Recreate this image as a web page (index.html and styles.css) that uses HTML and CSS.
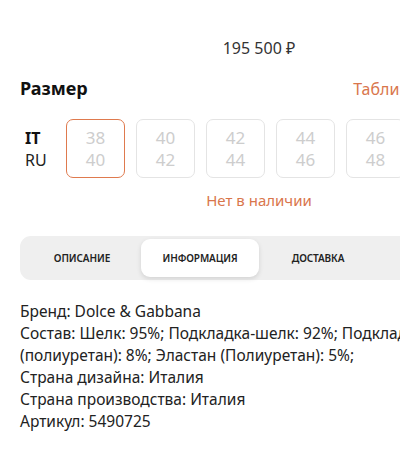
FILE: index.html
```html
<!DOCTYPE html>
<html lang="ru">
<head>
    <meta charset="UTF-8">
    <meta name="viewport" content="width=device-width, initial-scale=1.0">
    <title>Товар</title>
    <link rel="stylesheet" href="styles.css">
</head>
<body>
    <div class="page">
        <div class="price">195 500 ₽</div>

        <div class="size-head">
            <h2 class="size-title">Размер</h2>
            <a class="size-table" href="javascript:;">Таблица размеров</a>
        </div>

        <div class="size-row">
            <div class="size-labels">
                <span class="lbl-it">IT</span>
                <span class="lbl-ru">RU</span>
            </div>
            <div class="size-list">
                <div class="size-box active"><span>38</span><span>40</span></div>
                <div class="size-box"><span>40</span><span>42</span></div>
                <div class="size-box"><span>42</span><span>44</span></div>
                <div class="size-box"><span>44</span><span>46</span></div>
                <div class="size-box"><span>46</span><span>48</span></div>
                <div class="size-box"><span>48</span><span>50</span></div>
            </div>
        </div>

        <div class="stock">Нет в наличии</div>

        <div class="tabs">
            <a class="tab" href="javascript:;">Описание</a>
            <a class="tab current" href="javascript:;">Информация</a>
            <a class="tab" href="javascript:;">Доставка</a>
            <a class="tab" href="javascript:;">Отзывы</a>
        </div>

        <div class="info">
            <p>Бренд: Dolce &amp; Gabbana</p>
            <p>Состав: Шелк: 95%; Подкладка-шелк: 92%; Подкладка-эластан (полиуретан): 8%; Эластан (Полиуретан): 5%;</p>
            <p>Страна дизайна: Италия</p>
            <p>Страна производства: Италия</p>
            <p>Артикул: 5490725</p>
        </div>
    </div>
</body>
</html>
```

FILE: styles.css
```css
*{
    margin: 0;
    padding: 0;
    box-sizing: border-box;
}
html, body{
    overflow: hidden;
    background-color: #fff;
}
body{
    font-family: "Noto Sans", "Open Sans", sans-serif;
    color: #222;
}
.page{
    width: 518px;
    padding: 38px 20px 0;
}
.price{
    text-align: center;
    font-size: 16px;
    line-height: 20px;
    color: #333;
}

.size-head{
    display: flex;
    justify-content: space-between;
    align-items: baseline;
    margin-top: 18px;
}
.size-title{
    font-size: 18px;
    font-weight: 700;
    color: #111;
}
.size-table{
    font-size: 16px;
    color: #d9764c;
    text-decoration: none;
}

.size-row{
    display: flex;
    align-items: center;
    margin-top: 19px;
}
.size-labels{
    display: flex;
    flex-direction: column;
    gap: 2px;
    width: 46px;
    padding-left: 5px;
    font-size: 16px;
    line-height: 20px;
}
.lbl-it{
    font-weight: 700;
    color: #111;
}
.lbl-ru{
    color: #222;
}
.size-list{
    display: flex;
    gap: 11px;
}
.size-box{
    width: 59px;
    height: 59px;
    border: 1.5px solid #e4e4e4;
    border-radius: 7px;
    display: flex;
    flex-direction: column;
    align-items: center;
    justify-content: center;
    gap: 2px;
    font-size: 17px;
    line-height: 20px;
    color: #cdcdcd;
}
.size-box.active{
    border-color: #df7a4e;
}

.stock{
    text-align: center;
    margin-top: 12px;
    font-size: 15px;
    line-height: 20px;
    color: #d9764c;
}

.tabs{
    display: flex;
    margin-top: 26px;
    padding: 3px;
    height: 44px;
    background-color: #efefef;
    border-radius: 11px;
}
.tab{
    flex: 1;
    display: flex;
    align-items: center;
    justify-content: center;
    font-size: 10px;
    font-weight: 600;
    letter-spacing: -0.1px;
    text-transform: uppercase;
    color: #222;
    text-decoration: none;
    border-radius: 9px;
}
.tab.current{
    background-color: #fff;
    box-shadow: 0 2px 5px rgba(0,0,0,0.12);
}

.info{
    margin-top: 20px;
    font-size: 15.5px;
    line-height: 22px;
    color: #222;
}
```
